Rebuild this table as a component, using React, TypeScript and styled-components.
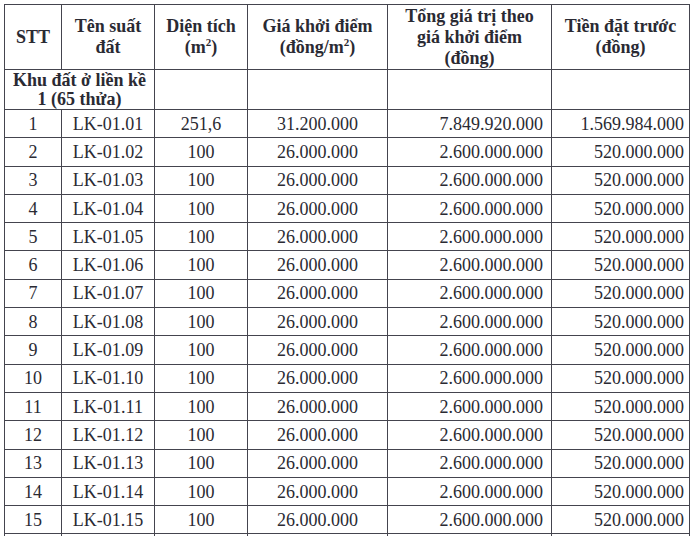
import { FC } from "react";
import styled, { createGlobalStyle } from "styled-components";

const serif = `"Liberation Serif", "Times New Roman", serif`;

const GlobalStyle = createGlobalStyle`
  html, body {
    margin: 0;
    padding: 0;
    background: #fff;
  }
  body {
    font-family: ${serif};
    color: #26262e;
    overflow: hidden;
  }
`;

const Page = styled.div`
  width: 700px;
  height: 536px;
  overflow: hidden;
  padding: 4px 0 0 4px;
  box-sizing: border-box;
`;

const Table = styled.table`
  border-collapse: collapse;
  table-layout: fixed;
  width: 685px;
  font-family: ${serif};
  font-size: 18px;
  color: #2a2a33;
`;

const HeadCell = styled.th`
  border: 1px solid #44444e;
  font-family: ${serif};
  font-weight: bold;
  line-height: 21px;
  text-align: center;
  vertical-align: middle;
  padding: 0 2px;
  height: 64px;
`;

const GroupCell = styled.td`
  border: 1px solid #44444e;
  font-family: ${serif};
  font-weight: bold;
  line-height: 19px;
  text-align: center;
  vertical-align: middle;
  padding: 1px 0 0;
  height: 35px;
`;

const Cell = styled.td<{ $pad?: number }>`
  border: 1px solid #44444e;
  font-family: ${serif};
  height: 27.3px;
  padding: 0 ${(p) => p.$pad ?? 0}px 0 0;
  text-align: ${(p) => (p.$pad ? "right" : "center")};
  vertical-align: middle;
  line-height: 20px;
  white-space: nowrap;
`;

const Sup = styled.sup`
  font-size: 11px;
  line-height: 0;
`;

type Lot = {
  stt: number;
  code: string;
  area: string;
  price: string;
  total: string;
  deposit: string;
};

const lots: Lot[] = [
  {
    stt: 1,
    code: "LK-01.01",
    area: "251,6",
    price: "31.200.000",
    total: "7.849.920.000",
    deposit: "1.569.984.000",
  },
  ...Array.from({ length: 14 }, (_, i) => ({
    stt: i + 2,
    code: `LK-01.${String(i + 2).padStart(2, "0")}`,
    area: "100",
    price: "26.000.000",
    total: "2.600.000.000",
    deposit: "520.000.000",
  })),
];

const widths = [57, 93, 93, 140, 164, 138];

const App: FC = () => {
  return (
    <Page>
      <GlobalStyle />
      <Table>
        <colgroup>
          {widths.map((w, i) => (
            <col key={i} style={{ width: w }} />
          ))}
        </colgroup>
        <thead>
          <tr>
            <HeadCell>STT</HeadCell>
            <HeadCell>
              Tên suất
              <br />
              đất
            </HeadCell>
            <HeadCell>
              Diện tích
              <br />
              (m<Sup>2</Sup>)
            </HeadCell>
            <HeadCell>
              Giá khởi điểm
              <br />
              (đồng/m<Sup>2</Sup>)
            </HeadCell>
            <HeadCell>
              Tổng giá trị theo
              <br />
              giá khởi điểm
              <br />
              (đồng)
            </HeadCell>
            <HeadCell>
              Tiền đặt trước
              <br />
              (đồng)
            </HeadCell>
          </tr>
        </thead>
        <tbody>
          <tr>
            <GroupCell colSpan={2}>
              Khu đất ở liền kề
              <br />1 (65 thửa)
            </GroupCell>
            <GroupCell />
            <GroupCell />
            <GroupCell />
            <GroupCell />
          </tr>
          {lots.map((l) => (
            <tr key={l.stt}>
              <Cell>{l.stt}</Cell>
              <Cell>{l.code}</Cell>
              <Cell>{l.area}</Cell>
              <Cell>{l.price}</Cell>
              <Cell $pad={8}>{l.total}</Cell>
              <Cell $pad={5}>{l.deposit}</Cell>
            </tr>
          ))}
          <tr>
            <Cell />
            <Cell />
            <Cell />
            <Cell />
            <Cell />
            <Cell />
          </tr>
        </tbody>
      </Table>
    </Page>
  );
};

export default App;
